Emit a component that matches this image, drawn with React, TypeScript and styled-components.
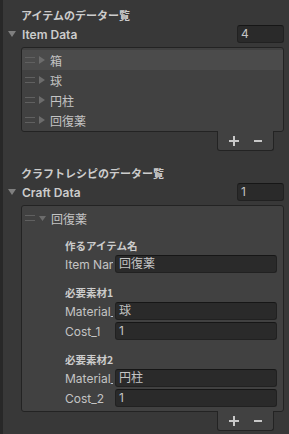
import React from "react";
import styled, { createGlobalStyle } from "styled-components";

const GlobalStyle = createGlobalStyle`
  html, body {
    margin: 0;
    padding: 0;
    background: #383838;
  }
  body {
    font-family: Inter, "Noto Sans CJK JP", sans-serif;
    font-size: 12px;
    color: #c4c4c4;
  }
`;

const Inspector = styled.div`
  min-height: 434px;
  box-sizing: border-box;
  border-left: 3px solid #282828;
  padding: 6px 5px 0 5px;
  display: flex;
  flex-direction: column;
`;

const Section = styled.section<{ $gap?: number }>`
  display: flex;
  flex-direction: column;
  margin-top: ${(p) => p.$gap ?? 0}px;
`;

const Title = styled.div`
  height: 19px;
  line-height: 19px;
  padding-left: 13px;
  font-family: "Noto Sans CJK JP", sans-serif;
  font-weight: 700;
  font-size: 11px;
  color: #cccccc;
  white-space: nowrap;
`;

const FoldoutRow = styled.div`
  display: flex;
  align-items: center;
  height: 18px;
`;

const FoldoutLabel = styled.div`
  flex: 1;
  margin-left: 6px;
  font-weight: 600;
  font-size: 12px;
  color: #cccccc;
`;

const IntField = styled.div`
  box-sizing: border-box;
  width: 47px;
  height: 18px;
  line-height: 16px;
  padding-left: 3px;
  background: #2a2a2a;
  border: 1px solid #212121;
  border-top-color: #161616;
  border-radius: 3px;
  color: #c4c4c4;
  font-size: 12px;
`;

const ListBox = styled.div`
  margin: 4px 0 0 13px;
  background: #414141;
  border: 1px solid #232323;
  border-radius: 3px;
  padding: 2px 0 1px;
  display: flex;
  flex-direction: column;
`;

const ElementRow = styled.div<{ $selected?: boolean }>`
  display: flex;
  align-items: center;
  height: 20px;
  padding-left: 3px;
  background: ${(p) => (p.$selected ? "#4b4b4b" : "transparent")};
  font-size: 12px;
  color: #c4c4c4;
`;

const Handle = styled.span`
  width: 10px;
  height: 4px;
  border-top: 1px solid #606060;
  border-bottom: 1px solid #606060;
  margin-right: 4px;
  flex: none;
`;

const ElementLabel = styled.span`
  margin-left: 5px;
  font-family: "Noto Sans CJK JP", sans-serif;
`;

const FooterBar = styled.div`
  display: flex;
  justify-content: flex-end;
  padding-right: 10px;
`;

const Footer = styled.div`
  box-sizing: border-box;
  width: 57px;
  height: 20px;
  margin-top: -1px;
  background: #414141;
  border: 1px solid #232323;
  border-top: none;
  border-radius: 0 0 3px 3px;
  display: flex;
  align-items: center;
  justify-content: center;
  gap: 15px;
`;

const Expanded = styled.div`
  display: flex;
  flex-direction: column;
  padding: 0 6px 3px 43px;
`;

const SubHeader = styled.div<{ $gap: number }>`
  height: 18px;
  line-height: 18px;
  margin-top: ${(p) => p.$gap}px;
  font-family: "Noto Sans CJK JP", sans-serif;
  font-weight: 700;
  font-size: 10.5px;
  color: #cccccc;
  white-space: nowrap;
`;

const FieldRow = styled.div<{ $gap?: number }>`
  display: flex;
  align-items: center;
  height: 18px;
  margin-top: ${(p) => p.$gap ?? 0}px;
`;

const FieldLabel = styled.div`
  width: 48px;
  margin-right: 2px;
  overflow: hidden;
  white-space: nowrap;
  font-size: 12px;
  color: #c4c4c4;
`;

const TextField = styled.div`
  flex: 1;
  box-sizing: border-box;
  height: 18px;
  line-height: 16px;
  padding-left: 3px;
  background: #2a2a2a;
  border: 1px solid #212121;
  border-top-color: #161616;
  border-radius: 3px;
  font-size: 12px;
  color: #c4c4c4;
  font-family: Inter, "Noto Sans CJK JP", sans-serif;
`;

const DownArrow = ({ color = "#7f7f7f", w = 8, h = 6 }: { color?: string; w?: number; h?: number }) => (
  <svg width={w} height={h} viewBox={`0 0 ${w} ${h}`} style={{ flex: "none" }}>
    <polygon points={`0,0 ${w},0 ${w / 2},${h}`} fill={color} />
  </svg>
);

const RightArrow = ({ color = "#6c6c6c" }: { color?: string }) => (
  <svg width={6} height={8} viewBox="0 0 6 8" style={{ flex: "none" }}>
    <polygon points="0,0 6,4 0,8" fill={color} />
  </svg>
);

const PlusIcon = () => (
  <svg width={10} height={10} viewBox="0 0 10 10">
    <rect x={0} y={4} width={10} height={2} fill="#c8c8c8" />
    <rect x={4} y={0} width={2} height={10} fill="#c8c8c8" />
  </svg>
);

const MinusIcon = () => (
  <svg width={8} height={10} viewBox="0 0 8 10">
    <rect x={0} y={4} width={8} height={2} fill="#c8c8c8" />
  </svg>
);

const ListFooter = () => (
  <FooterBar>
    <Footer>
      <PlusIcon />
      <MinusIcon />
    </Footer>
  </FooterBar>
);

const items = ["箱", "球", "円柱", "回復薬"];

export default function App() {
  return (
    <>
      <GlobalStyle />
      <Inspector>
        <Section>
          <Title>アイテムのデーター覧</Title>
          <FoldoutRow>
            <DownArrow />
            <FoldoutLabel>Item Data</FoldoutLabel>
            <IntField>4</IntField>
          </FoldoutRow>
          <ListBox>
            {items.map((it, i) => (
              <ElementRow key={it} $selected={i === 0}>
                <Handle />
                <RightArrow />
                <ElementLabel>{it}</ElementLabel>
              </ElementRow>
            ))}
          </ListBox>
          <ListFooter />
        </Section>

        <Section $gap={13}>
          <Title>クラフトレシピのデーター覧</Title>
          <FoldoutRow>
            <DownArrow />
            <FoldoutLabel>Craft Data</FoldoutLabel>
            <IntField>1</IntField>
          </FoldoutRow>
          <ListBox>
            <ElementRow>
              <Handle />
              <DownArrow color="#6c6c6c" w={7} h={5} />
              <ElementLabel>回復薬</ElementLabel>
            </ElementRow>
            <Expanded>
              <SubHeader $gap={9}>作るアイテム名</SubHeader>
              <FieldRow>
                <FieldLabel>Item Name</FieldLabel>
                <TextField>回復薬</TextField>
              </FieldRow>
              <SubHeader $gap={11}>必要素材1</SubHeader>
              <FieldRow>
                <FieldLabel>Material_1</FieldLabel>
                <TextField>球</TextField>
              </FieldRow>
              <FieldRow $gap={2}>
                <FieldLabel>Cost_1</FieldLabel>
                <TextField>1</TextField>
              </FieldRow>
              <SubHeader $gap={11}>必要素材2</SubHeader>
              <FieldRow>
                <FieldLabel>Material_2</FieldLabel>
                <TextField>円柱</TextField>
              </FieldRow>
              <FieldRow $gap={2}>
                <FieldLabel>Cost_2</FieldLabel>
                <TextField>1</TextField>
              </FieldRow>
            </Expanded>
          </ListBox>
          <ListFooter />
        </Section>
      </Inspector>
    </>
  );
}
